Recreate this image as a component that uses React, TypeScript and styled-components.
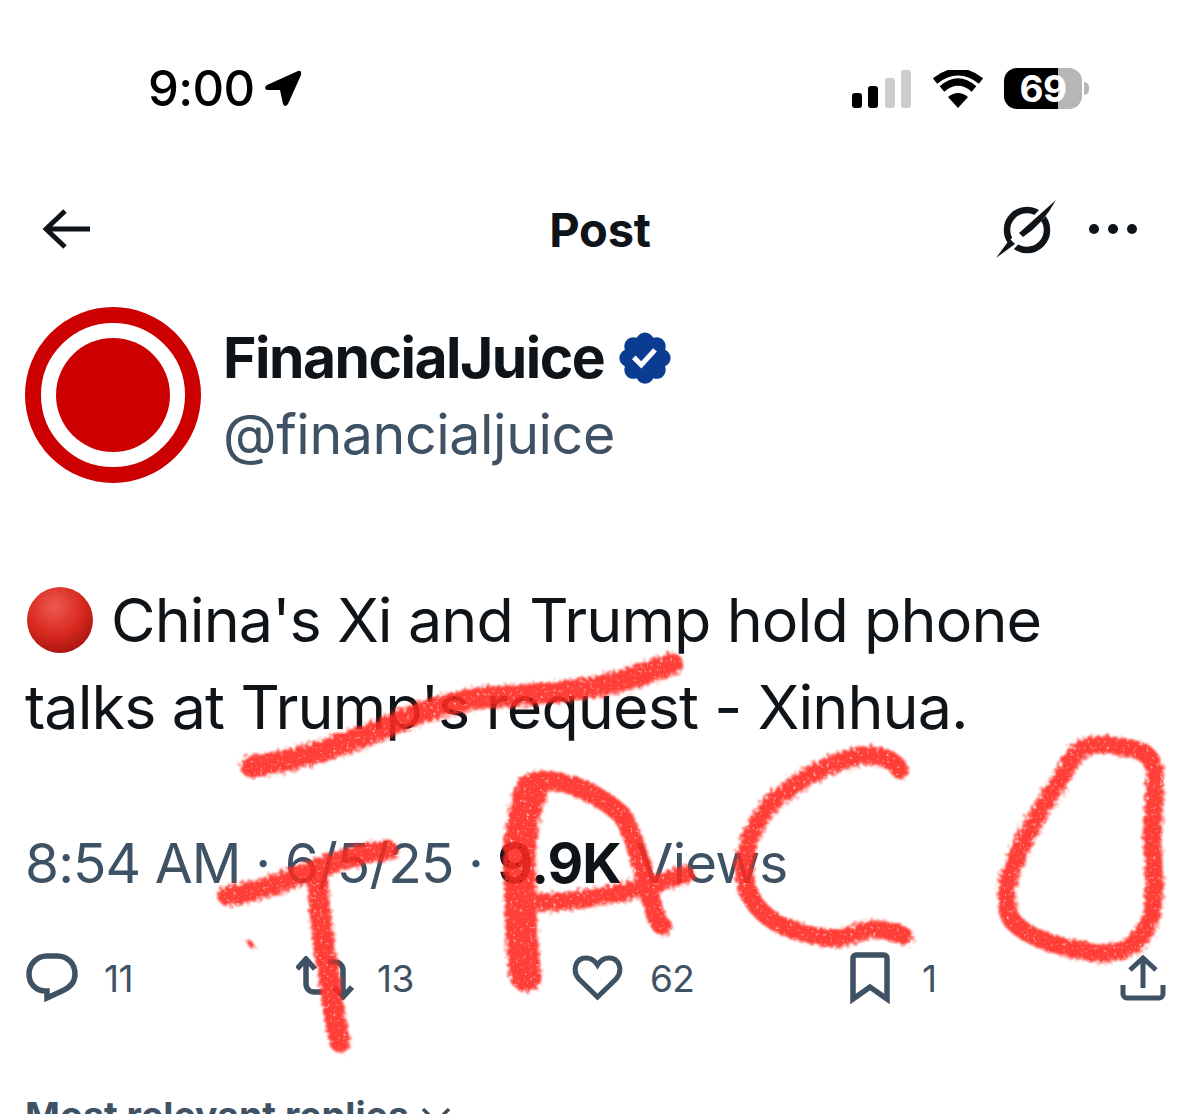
import styled, { createGlobalStyle } from 'styled-components'

const GlobalStyle = createGlobalStyle`
  html, body {
    margin: 0;
    padding: 0;
    background: #fff;
  }
  body {
    font-family: Inter, "Liberation Sans", sans-serif;
    color: #0f1419;
  }
`

const Screen = styled.div`
  position: relative;
  width: 1200px;
  height: 1114px;
  overflow: hidden;
  background: #fff;
`

const StatusBar = styled.div`
  height: 67px;
  padding: 55px 111px 0 148px;
  display: flex;
  justify-content: space-between;
  align-items: center;
`

const TimeGroup = styled.div`
  display: flex;
  align-items: center;
  gap: 9px;
`

const Time = styled.span`
  font-size: 49px;
  line-height: 42px;
  font-weight: 500;
  letter-spacing: -0.6px;
  color: #000;
`

const StatusIcons = styled.div`
  display: flex;
  align-items: center;
  gap: 20px;
  margin-right: 7px;
`

const Battery = styled.div`
  position: relative;
  width: 78px;
  height: 41px;
  border-radius: 13px;
  background: linear-gradient(90deg, #000 0 54px, #b6b6b6 54px 100%);
  color: #fff;
  font-size: 37px;
  font-weight: 700;
  line-height: 41px;
  text-align: center;
  letter-spacing: -0.5px;

  &::after {
    content: '';
    position: absolute;
    right: -7px;
    top: 14px;
    width: 5px;
    height: 13px;
    border-radius: 0 5px 5px 0;
    background: #b6b6b6;
  }
`

const NavBar = styled.div`
  height: 64px;
  margin-top: 75px;
  padding: 0 43px;
  display: grid;
  grid-template-columns: 1fr auto 1fr;
  align-items: center;
`

const NavTitle = styled.div`
  font-size: 47px;
  font-weight: 700;
  letter-spacing: -0.2px;
`

const NavActions = styled.div`
  display: flex;
  justify-content: flex-end;
  align-items: center;
  gap: 32px;
  padding-right: 20px;
`

const Dots = styled.div`
  display: flex;
  gap: 9px;
`

const Dot = styled.span`
  width: 10px;
  height: 10px;
  border-radius: 50%;
  background: #0f1419;
`

const Author = styled.div`
  margin-top: 46px;
  padding-left: 25px;
  display: flex;
  align-items: center;
  gap: 22px;
`

const Avatar = styled.div`
  width: 176px;
  height: 176px;
  box-sizing: border-box;
  padding: 15px;
  border: 16px solid #cc0000;
  border-radius: 50%;
  background: #fff;
`

const AvatarDisc = styled.div`
  width: 100%;
  height: 100%;
  border-radius: 50%;
  background: #cc0000;
`

const Names = styled.div`
  display: flex;
  flex-direction: column;
  gap: 16px;
  margin-top: 2px;
`

const NameRow = styled.div`
  display: flex;
  align-items: center;
  gap: 11px;
`

const DisplayName = styled.span`
  font-size: 57px;
  line-height: 60px;
  font-weight: 700;
  letter-spacing: -1.5px;
`

const Handle = styled.span`
  font-size: 55.5px;
  line-height: 60px;
  color: #3f5264;
  letter-spacing: -0.4px;
`

const PostText = styled.div`
  margin-top: 94px;
  padding-left: 25px;
  font-size: 61px;
  line-height: 87px;
  letter-spacing: -0.9px;
`

const Emoji = styled.svg`
  width: 70px;
  height: 70px;
  margin-right: 16px;
  vertical-align: -13px;
`

const Meta = styled.div`
  margin-top: 80px;
  padding-left: 25px;
  font-size: 55px;
  line-height: 64px;
  letter-spacing: -0.9px;
  color: #3f5264;
`

const MetaStrong = styled.strong`
  color: #0f1419;
  font-weight: 700;
`

const Actions = styled.div`
  margin-top: 57px;
  padding-left: 26px;
  display: grid;
  grid-template-columns: 270px 276px 278px 270px auto;
  height: 52px;
  align-items: center;
`

const Action = styled.div`
  display: flex;
  align-items: center;
  gap: ${({ $gap }: { $gap: number }) => $gap}px;
  color: #3f5264;
  font-size: 37px;
  letter-spacing: -0.6px;
`

const RepliesRow = styled.div`
  margin-top: 92px;
  padding-left: 25px;
  display: flex;
  align-items: center;
  gap: 12px;
  font-size: 37.5px;
  line-height: 40px;
  font-weight: 700;
  color: #3f5264;
`

const Ink = styled.svg`
  position: absolute;
  left: 0;
  top: 0;
  width: 1200px;
  height: 1114px;
  pointer-events: none;
  opacity: 0.9;
`

const strokes: [string, number][] = [
  // strike through
  ['M252 767 C290 762 330 750 370 734 C410 716 450 700 490 697 C540 695 590 690 625 680 C645 674 660 668 672 664', 22],
  // T
  ['M228 896 C255 892 285 882 320 868 C345 858 370 852 388 850', 20],
  ['M316 870 C320 900 320 930 328 970 C332 1000 336 1025 340 1042', 21],
  // A
  ['M526 976 C522 950 520 920 520 880 C518 840 524 810 532 790', 32],
  ['M538 780 C570 780 600 795 622 815 C634 835 640 860 650 895 C654 910 658 925 662 926', 19],
  ['M520 902 C560 905 600 898 640 888 C660 882 675 878 686 875', 18],
  // C
  ['M900 770 C895 760 880 754 860 756 C830 762 800 780 775 800 C755 820 744 845 744 875 C748 905 770 925 800 932 C825 940 845 940 860 932 C875 926 895 932 904 936', 18],
  // O
  ['M1155 770 C1150 750 1135 748 1115 746 C1095 742 1080 745 1070 762 C1055 790 1035 815 1020 850 C1008 875 1002 895 1010 918 C1025 938 1060 948 1095 953 C1125 955 1140 945 1150 920 C1158 890 1152 860 1152 830 C1155 810 1155 790 1155 770', 18],
]

const App = () => {
  return (
    <Screen>
      <GlobalStyle />
      <StatusBar>
        <TimeGroup>
          <Time>9:00</Time>
          <svg width='38' height='37' viewBox='0 0 38 37'>
            <path d='M34 1 L3 15 Q-1 18 3 20 L16 20 L19 34 Q21 38 24 34 L37 5 Q38 0 34 1Z' fill='#000' />
          </svg>
        </TimeGroup>
        <StatusIcons>
          <svg width='60' height='38' viewBox='0 0 60 38'>
            <rect x='0' y='23' width='10' height='15' rx='3' fill='#000' />
            <rect x='16' y='16' width='10' height='22' rx='3' fill='#000' />
            <rect x='33' y='8' width='10' height='30' rx='3' fill='#ccc' />
            <rect x='49' y='0' width='10' height='38' rx='3' fill='#ccc' />
          </svg>
          <svg width='52' height='38' viewBox='0 0 52 38'>
            <path d='M26 38 L16 27 Q26 19 36 27Z' fill='#000' />
            <path d='M10 19 Q26 5 42 19' fill='none' stroke='#000' strokeWidth='7' />
            <path d='M3 11 Q26 -7 49 11' fill='none' stroke='#000' strokeWidth='7' />
          </svg>
          <Battery>69</Battery>
        </StatusIcons>
      </StatusBar>

      <NavBar>
        <svg width='48' height='40' viewBox='0 0 48 40'>
          <path d='M47 20 H4 M22 2 L3 20 L22 38' fill='none' stroke='#0f1419' strokeWidth='5' />
        </svg>
        <NavTitle>Post</NavTitle>
        <NavActions>
          <svg width='62' height='58' viewBox='0 0 62 58'>
            <circle cx='32' cy='30' r='20' fill='none' stroke='#0f1419' strokeWidth='6.5' />
            <path d='M0 62 L62 -2' stroke='#fff' strokeWidth='9' />
            <path d='M61 0 L24 33 L28 37 Q48 24 61 0Z' fill='#0f1419' />
            <path d='M1 58 L15 39 L20 44Z' fill='#0f1419' />
          </svg>
          <Dots>
            <Dot />
            <Dot />
            <Dot />
          </Dots>
        </NavActions>
      </NavBar>

      <Author>
        <Avatar>
          <AvatarDisc />
        </Avatar>
        <Names>
          <NameRow>
            <DisplayName>FinancialJuice</DisplayName>
            <svg width='60' height='60' viewBox='0 0 24 24'>
              <path
                fill='#0a3d91'
                d='M22.25 12c0-1.43-.88-2.67-2.19-3.34.46-1.39.2-2.9-.81-3.91s-2.52-1.27-3.91-.81c-.66-1.31-1.91-2.19-3.34-2.19s-2.67.88-3.33 2.19c-1.4-.46-2.91-.2-3.92.81s-1.26 2.52-.8 3.91c-1.31.67-2.2 1.91-2.2 3.34s.89 2.67 2.2 3.34c-.46 1.39-.21 2.9.8 3.91s2.52 1.26 3.91.81c.67 1.31 1.91 2.19 3.34 2.19s2.68-.88 3.34-2.19c1.39.45 2.9.2 3.91-.81s1.27-2.52.81-3.91c1.31-.67 2.19-1.91 2.19-3.34zm-11.71 4.2L6.8 12.46l1.41-1.42 2.26 2.26 4.8-5.23 1.47 1.36-6.2 6.77z'
              />
            </svg>
          </NameRow>
          <Handle>@financialjuice</Handle>
        </Names>
      </Author>

      <PostText>
        <Emoji viewBox='0 0 70 70'>
          <defs>
            <radialGradient id='ball' cx='42%' cy='30%' r='75%'>
              <stop offset='0' stopColor='#ee5a50' />
              <stop offset='0.55' stopColor='#d92a20' />
              <stop offset='1' stopColor='#a5140f' />
            </radialGradient>
          </defs>
          <circle cx='35' cy='35' r='33' fill='url(#ball)' />
        </Emoji>
        China's Xi and Trump hold phone
        <br />
        talks at Trump's request - Xinhua.
      </PostText>

      <Meta>
        8:54 AM · 6/5/25 · <MetaStrong>9.9K</MetaStrong> Views
      </Meta>

      <Actions>
        <Action $gap={26}>
          <svg width='52' height='50' viewBox='0 0 52 50'>
            <path
              d='M21 3h10c11 0 18 8 18 18 0 9-6 14-13 17l-15 7v-7h-1C10 38 3 31 3 21 3 11 11 3 21 3z'
              fill='none'
              stroke='#3f5264'
              strokeWidth='5.5'
            />
          </svg>
          11
        </Action>
        <Action $gap={23}>
          <svg width='58' height='44' viewBox='0 0 58 44'>
            <path
              d='M1 13 L10 3 L19 13 M10 4 V28 a8 8 0 0 0 8 8 H26 M32 6 H39 a8 8 0 0 1 8 8 V40 M38 31 L47 41 L56 31'
              fill='none'
              stroke='#3f5264'
              strokeWidth='5.5'
            />
          </svg>
          13
        </Action>
        <Action $gap={27}>
          <svg width='51' height='46' viewBox='0 0 51 46'>
            <path
              d='M25.5 42 L7 24 C0 16 3 3 14 3 C19 3 23 6 25.5 10 C28 6 32 3 37 3 C48 3 51 16 44 24 Z'
              fill='none'
              stroke='#3f5264'
              strokeWidth='5'
            />
          </svg>
          62
        </Action>
        <Action $gap={32}>
          <svg width='40' height='52' viewBox='0 0 40 52'>
            <path
              d='M6 3h28a3 3 0 0 1 3 3v41L20 35 3 47V6a3 3 0 0 1 3-3z'
              fill='none'
              stroke='#3f5264'
              strokeWidth='5.5'
            />
          </svg>
          1
        </Action>
        <Action $gap={0}>
          <svg width='46' height='46' viewBox='0 0 46 46'>
            <path
              d='M23 33V4 M10 15 L23 3 L36 15 M3 30 V39 a4 4 0 0 0 4 4 H39 a4 4 0 0 0 4-4 V30'
              fill='none'
              stroke='#3f5264'
              strokeWidth='5'
            />
          </svg>
        </Action>
      </Actions>

      <RepliesRow>
        Most relevant replies
        <svg width='30' height='18' viewBox='0 0 30 18'>
          <path d='M2 2 L15 15 L28 2' fill='none' stroke='#3f5264' strokeWidth='3.5' />
        </svg>
      </RepliesRow>

      <Ink viewBox='0 0 1200 1114'>
        <defs>
          <filter id='rough' x='-5%' y='-5%' width='110%' height='110%'>
            <feTurbulence type='fractalNoise' baseFrequency='0.3' numOctaves='3' seed='4' result='noise' />
            <feDisplacementMap in='SourceGraphic' in2='noise' scale='11' result='moved' />
            <feGaussianBlur in='moved' stdDeviation='0.9' result='soft' />
            <feColorMatrix
              in='noise'
              type='matrix'
              values='0 0 0 0 0  0 0 0 0 0  0 0 0 0 0  0 0 0 2.6 0'
              result='grain'
            />
            <feComposite in='soft' in2='grain' operator='in' />
          </filter>
        </defs>
        <g filter='url(#rough)' fill='none' stroke='#ff2a20' strokeLinecap='round' strokeLinejoin='round'>
          {strokes.map(([d, width]) => (
            <path key={d} d={d} strokeWidth={width} />
          ))}
          <path d='M249 942 L252 946' strokeWidth={5} />
        </g>
      </Ink>
    </Screen>
  )
}

export default App
